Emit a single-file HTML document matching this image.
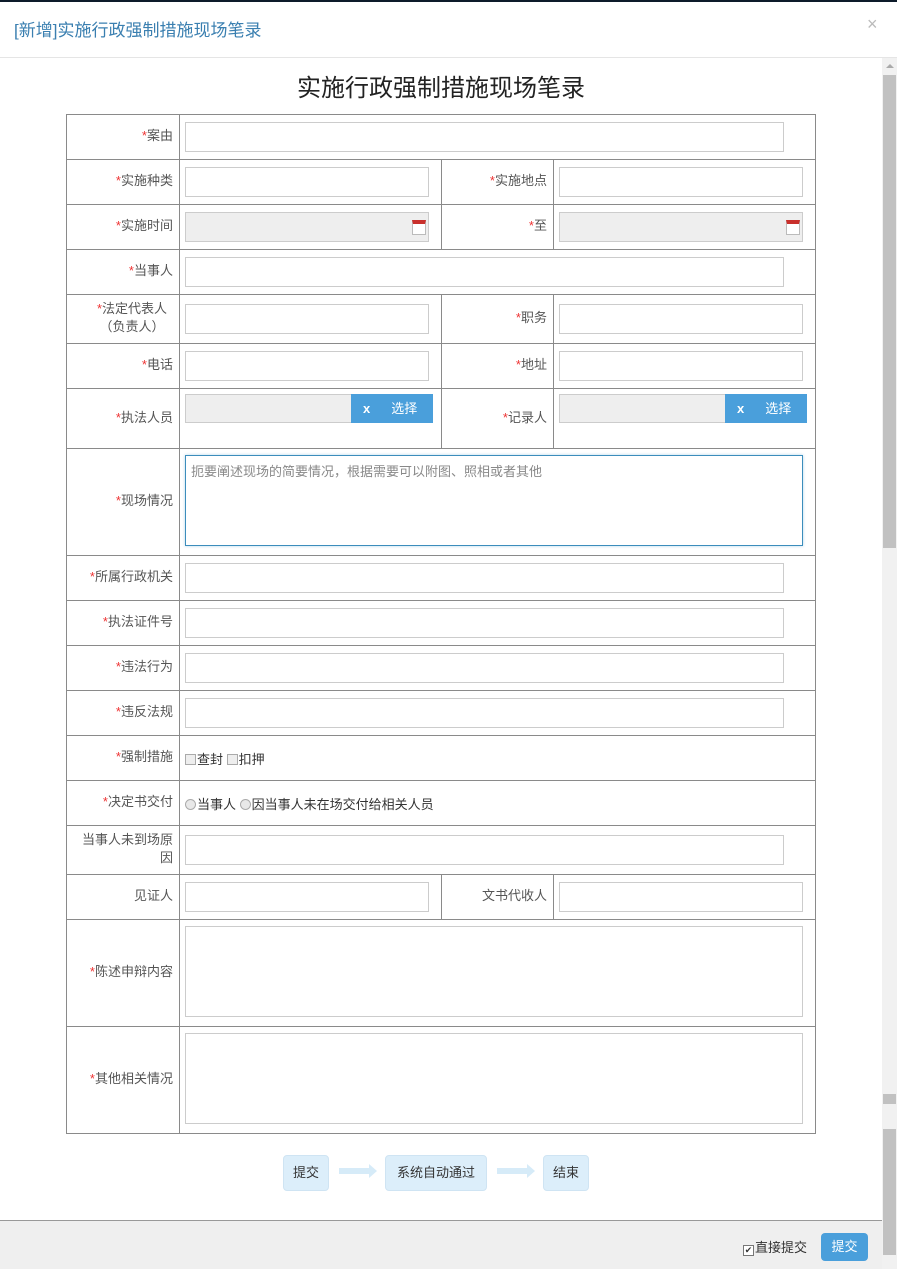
<!DOCTYPE html>
<html><head><meta charset="utf-8"><style>
*{box-sizing:border-box;margin:0;padding:0}
body{width:897px;height:1269px;overflow:hidden;background:#fff;font-family:"Liberation Sans","Noto Sans CJK SC","WenQuanYi Zen Hei",sans-serif;font-size:13px;color:#333;position:relative}
.a{position:absolute}
.h{position:absolute;left:66px;width:750px;height:1px;background:#8a8a8a}
.v{position:absolute;width:1px;background:#8a8a8a}
.lb{position:absolute;text-align:right;color:#555;font-size:13px;line-height:18px;display:flex;align-items:center;justify-content:flex-end;padding-right:6px;padding-bottom:2px}
.lb i{color:#e33;font-style:normal}
.in{position:absolute;height:30px;border:1px solid #ccc;background:#fff}
.g{background:#eee}
.cal{position:absolute;right:2px;top:7px;width:14px;height:15px;background:#fff;border:1px solid #bbb;border-top:4px solid #c9302c}
.btn{position:absolute;height:29px;background:#4a9fdb;color:#fff;font-size:13px;line-height:29px}
.ta{position:absolute;border:1px solid #ccc;background:#fff}
.box{position:absolute;top:1155px;height:36px;background:#dceefa;border:1px solid #cfe4f3;border-radius:4px;font-size:13px;line-height:34px;text-align:center;color:#333}
.arr{position:absolute;top:1168px;width:30px;height:6px;background:#d6ebf8}
.arr:after{content:"";position:absolute;right:-8px;top:-4px;border-left:8px solid #d6ebf8;border-top:7px solid transparent;border-bottom:7px solid transparent}
.cb{display:inline-block;width:11px;height:11px;border:1px solid #aaa;background:#eee;vertical-align:-1px;margin-right:1px}
.rd{display:inline-block;width:11px;height:11px;border:1px solid #aaa;border-radius:50%;background:#e8e8e8;vertical-align:-1px;margin-right:1px}
</style></head><body>
<div class="a" style="left:0;top:0;width:897px;height:2px;background:#0d1b2a"></div>
<div class="a" style="left:14px;top:16px;font-size:17px;color:#3a7fb0">[新增]实施行政强制措施现场笔录</div>
<div class="a" style="left:867px;top:14px;font-size:18px;color:#bbb">×</div>
<div class="a" style="left:0;top:57px;width:897px;height:1px;background:#e5e5e5"></div>
<div class="a" style="left:0;top:68px;width:882px;text-align:center;font-size:24px;color:#222">实施行政强制措施现场笔录</div>

<!-- scrollbar -->
<div class="a" style="left:882px;top:58px;width:15px;height:1211px;background:#f1f1f1"></div>
<div class="a" style="left:883px;top:75px;width:13px;height:473px;background:#c1c1c1"></div>
<div class="a" style="left:883px;top:1094px;width:13px;height:10px;background:#c1c1c1"></div>
<div class="a" style="left:883px;top:1129px;width:13px;height:126px;background:#c1c1c1"></div>
<div class="a" style="left:886px;top:64px;border-left:4px solid transparent;border-right:4px solid transparent;border-bottom:4px solid #aaa"></div>

<!-- table lines -->
<div class="h" style="top:114px"></div><div class="h" style="top:159px"></div><div class="h" style="top:204px"></div><div class="h" style="top:249px"></div><div class="h" style="top:294px"></div><div class="h" style="top:343px"></div><div class="h" style="top:388px"></div><div class="h" style="top:448px"></div><div class="h" style="top:555px"></div><div class="h" style="top:600px"></div><div class="h" style="top:645px"></div><div class="h" style="top:690px"></div><div class="h" style="top:735px"></div><div class="h" style="top:780px"></div><div class="h" style="top:825px"></div><div class="h" style="top:874px"></div><div class="h" style="top:919px"></div><div class="h" style="top:1026px"></div><div class="h" style="top:1133px"></div>
<div class="v" style="left:66px;top:114px;height:1020px"></div>
<div class="v" style="left:815px;top:114px;height:1020px"></div>
<div class="v" style="left:179px;top:114px;height:1020px"></div>
<div class="v" style="left:441px;top:159px;height:90px"></div><div class="v" style="left:553px;top:159px;height:90px"></div>
<div class="v" style="left:441px;top:294px;height:154px"></div><div class="v" style="left:553px;top:294px;height:154px"></div>
<div class="v" style="left:441px;top:874px;height:45px"></div><div class="v" style="left:553px;top:874px;height:45px"></div>

<!-- labels -->
<div class="lb" style="left:67px;width:112px;top:115px;height:44px"><i>*</i>案由</div>
<div class="lb" style="left:67px;width:112px;top:160px;height:44px"><i>*</i>实施种类</div>
<div class="lb" style="left:442px;width:111px;top:160px;height:44px"><i>*</i>实施地点</div>
<div class="lb" style="left:67px;width:112px;top:205px;height:44px"><i>*</i>实施时间</div>
<div class="lb" style="left:442px;width:111px;top:205px;height:44px"><i>*</i>至</div>
<div class="lb" style="left:67px;width:112px;top:250px;height:44px"><i>*</i>当事人</div>
<div class="lb" style="left:67px;width:112px;top:295px;height:48px;text-align:center;justify-content:center;padding-left:18px;padding-right:0"><span><i>*</i>法定代表人<br>（负责人）</span></div>
<div class="lb" style="left:442px;width:111px;top:295px;height:48px"><i>*</i>职务</div>
<div class="lb" style="left:67px;width:112px;top:344px;height:44px"><i>*</i>电话</div>
<div class="lb" style="left:442px;width:111px;top:344px;height:44px"><i>*</i>地址</div>
<div class="lb" style="left:67px;width:112px;top:389px;height:59px"><i>*</i>执法人员</div>
<div class="lb" style="left:442px;width:111px;top:389px;height:59px"><i>*</i>记录人</div>
<div class="lb" style="left:67px;width:112px;top:449px;height:106px"><i>*</i>现场情况</div>
<div class="lb" style="left:67px;width:112px;top:556px;height:44px"><i>*</i>所属行政机关</div>
<div class="lb" style="left:67px;width:112px;top:601px;height:44px"><i>*</i>执法证件号</div>
<div class="lb" style="left:67px;width:112px;top:646px;height:44px"><i>*</i>违法行为</div>
<div class="lb" style="left:67px;width:112px;top:691px;height:44px"><i>*</i>违反法规</div>
<div class="lb" style="left:67px;width:112px;top:736px;height:44px"><i>*</i>强制措施</div>
<div class="lb" style="left:67px;width:112px;top:781px;height:44px"><i>*</i>决定书交付</div>
<div class="lb" style="left:67px;width:112px;top:826px;height:48px"><span>当事人未到场原<br>因</span></div>
<div class="lb" style="left:67px;width:112px;top:875px;height:44px">见证人</div>
<div class="lb" style="left:442px;width:111px;top:875px;height:44px">文书代收人</div>
<div class="lb" style="left:67px;width:112px;top:920px;height:106px"><i>*</i>陈述申辩内容</div>
<div class="lb" style="left:67px;width:112px;top:1027px;height:106px"><i>*</i>其他相关情况</div>

<!-- inputs -->
<div class="in" style="left:185px;top:122px;width:599px"></div>
<div class="in" style="left:185px;top:167px;width:244px"></div>
<div class="in" style="left:559px;top:167px;width:244px"></div>
<div class="in g" style="left:185px;top:212px;width:244px"><div class="cal"></div></div>
<div class="in g" style="left:559px;top:212px;width:244px"><div class="cal"></div></div>
<div class="in" style="left:185px;top:257px;width:599px"></div>
<div class="in" style="left:185px;top:304px;width:244px"></div>
<div class="in" style="left:559px;top:304px;width:244px"></div>
<div class="in" style="left:185px;top:351px;width:244px"></div>
<div class="in" style="left:559px;top:351px;width:244px"></div>
<div class="in g" style="left:185px;top:394px;width:167px;height:29px"></div>
<div class="btn" style="left:351px;top:394px;width:82px"><span style="margin-left:12px;font-weight:bold">x</span><span style="margin-left:21px">选择</span></div>
<div class="in g" style="left:559px;top:394px;width:167px;height:29px"></div>
<div class="btn" style="left:725px;top:394px;width:82px"><span style="margin-left:12px;font-weight:bold">x</span><span style="margin-left:21px">选择</span></div>
<div class="ta" style="left:185px;top:455px;width:618px;height:91px;border-color:#3c8dbc;box-shadow:0 0 3px #b5d5ea;padding:5px 5px;color:#888">扼要阐述现场的简要情况，根据需要可以附图、照相或者其他</div>
<div class="in" style="left:185px;top:563px;width:599px"></div>
<div class="in" style="left:185px;top:608px;width:599px"></div>
<div class="in" style="left:185px;top:653px;width:599px"></div>
<div class="in" style="left:185px;top:698px;width:599px"></div>
<div class="a" style="left:185px;top:749px;font-size:13px;color:#333"><span class="cb"></span>查封 <span class="cb"></span>扣押</div>
<div class="a" style="left:185px;top:794px;font-size:13px;color:#333"><span class="rd"></span>当事人 <span class="rd"></span>因当事人未在场交付给相关人员</div>
<div class="in" style="left:185px;top:835px;width:599px"></div>
<div class="in" style="left:185px;top:882px;width:244px"></div>
<div class="in" style="left:559px;top:882px;width:244px"></div>
<div class="ta" style="left:185px;top:926px;width:618px;height:91px"></div>
<div class="ta" style="left:185px;top:1033px;width:618px;height:91px"></div>

<!-- flow -->
<div class="box" style="left:283px;width:46px">提交</div>
<div class="arr" style="left:339px"></div>
<div class="box" style="left:385px;width:102px">系统自动通过</div>
<div class="arr" style="left:497px"></div>
<div class="box" style="left:543px;width:46px">结束</div>

<!-- footer -->
<div class="a" style="left:0;top:1220px;width:882px;height:49px;background:#efefef;border-top:1px solid #999"></div>
<div class="a" style="left:743px;top:1237px;font-size:13px;color:#333"><span class="cb" style="background:#fff;border-color:#777;font-size:9px;line-height:9px;text-align:center">✔</span>直接提交</div>
<div class="a" style="left:821px;top:1233px;width:47px;height:28px;background:#4a9fdb;border-radius:4px;color:#fff;text-align:center;line-height:28px;font-size:13px">提交</div>
</body></html>
